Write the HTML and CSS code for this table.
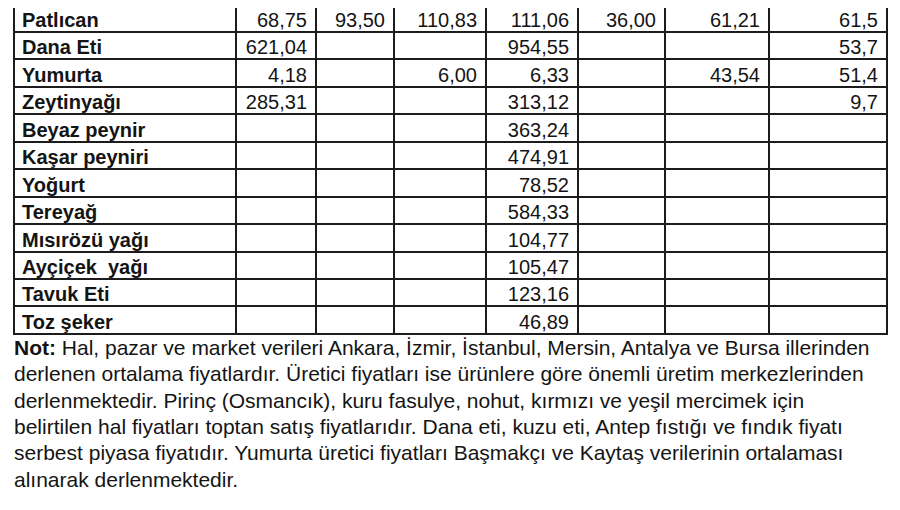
FILE: index.html
```html
<!DOCTYPE html>
<html lang="tr">
<head>
<meta charset="utf-8">
<title>Fiyatlar</title>
<link rel="stylesheet" href="styles.css">
</head>
<body>
<div class="page">
  <table class="prices">
    <colgroup>
      <col class="c-name">
      <col class="c2">
      <col class="c3">
      <col class="c4">
      <col class="c5">
      <col class="c6">
      <col class="c7">
      <col class="c8">
    </colgroup>
    <tbody>
      <tr class="first"><th>Patlıcan</th><td>68,75</td><td>93,50</td><td>110,83</td><td>111,06</td><td>36,00</td><td>61,21</td><td>61,5</td></tr>
      <tr><th>Dana Eti</th><td>621,04</td><td></td><td></td><td>954,55</td><td></td><td></td><td>53,7</td></tr>
      <tr><th>Yumurta</th><td>4,18</td><td></td><td>6,00</td><td>6,33</td><td></td><td>43,54</td><td>51,4</td></tr>
      <tr><th>Zeytinyağı</th><td>285,31</td><td></td><td></td><td>313,12</td><td></td><td></td><td>9,7</td></tr>
      <tr><th>Beyaz peynir</th><td></td><td></td><td></td><td>363,24</td><td></td><td></td><td></td></tr>
      <tr><th>Kaşar peyniri</th><td></td><td></td><td></td><td>474,91</td><td></td><td></td><td></td></tr>
      <tr><th>Yoğurt</th><td></td><td></td><td></td><td>78,52</td><td></td><td></td><td></td></tr>
      <tr><th>Tereyağ</th><td></td><td></td><td></td><td>584,33</td><td></td><td></td><td></td></tr>
      <tr><th>Mısırözü yağı</th><td></td><td></td><td></td><td>104,77</td><td></td><td></td><td></td></tr>
      <tr><th>Ayçiçek&nbsp; yağı</th><td></td><td></td><td></td><td>105,47</td><td></td><td></td><td></td></tr>
      <tr><th>Tavuk Eti</th><td></td><td></td><td></td><td>123,16</td><td></td><td></td><td></td></tr>
      <tr><th>Toz şeker</th><td></td><td></td><td></td><td>46,89</td><td></td><td></td><td></td></tr>
    </tbody>
  </table>
  <p class="note"><strong>Not:</strong> Hal, pazar ve market verileri Ankara, İzmir, İstanbul, Mersin, Antalya ve Bursa illerinden derlenen ortalama fiyatlardır. Üretici fiyatları ise ürünlere göre önemli üretim merkezlerinden derlenmektedir. Pirinç (Osmancık), kuru fasulye, nohut, kırmızı ve yeşil mercimek için belirtilen hal fiyatları toptan satış fiyatlarıdır. Dana eti, kuzu eti, Antep fıstığı ve fındık fiyatı serbest piyasa fiyatıdır. Yumurta üretici fiyatları Başmakçı ve Kaytaş verilerinin ortalaması alınarak derlenmektedir.</p>
</div>
</body>
</html>
```

FILE: styles.css
```css
html, body {
  margin: 0;
  padding: 0;
  background: #ffffff;
}

.page {
  padding: 8px 14px 0 13px;
  font-family: "Liberation Sans", Arial, sans-serif;
  color: #141414;
}

.prices {
  border-collapse: collapse;
  table-layout: fixed;
  width: 873px;
  font-size: 20px;
}

.c-name { width: 222px; }
.c2 { width: 80px; }
.c3 { width: 78px; }
.c4 { width: 92px; }
.c5 { width: 92px; }
.c6 { width: 87px; }
.c7 { width: 104px; }
.c8 { width: 118px; }

.prices th,
.prices td {
  border-left: 2px solid #1c1c1c;
  border-right: 2px solid #1c1c1c;
  border-bottom: 2px solid #1c1c1c;
  height: 24.45px;
  padding: 0 8px 1px 7px;
  line-height: 20px;
  vertical-align: bottom;
  white-space: nowrap;
}

.prices tr.first th,
.prices tr.first td {
  height: 22px;
}

.prices th {
  text-align: left;
  font-weight: bold;
}

.prices td {
  text-align: right;
}

.note {
  margin: 0;
  width: 873px;
  font-size: 21px;
  line-height: 26.4px;
  padding-left: 1px;
}

.note strong {
  font-weight: bold;
}
```
